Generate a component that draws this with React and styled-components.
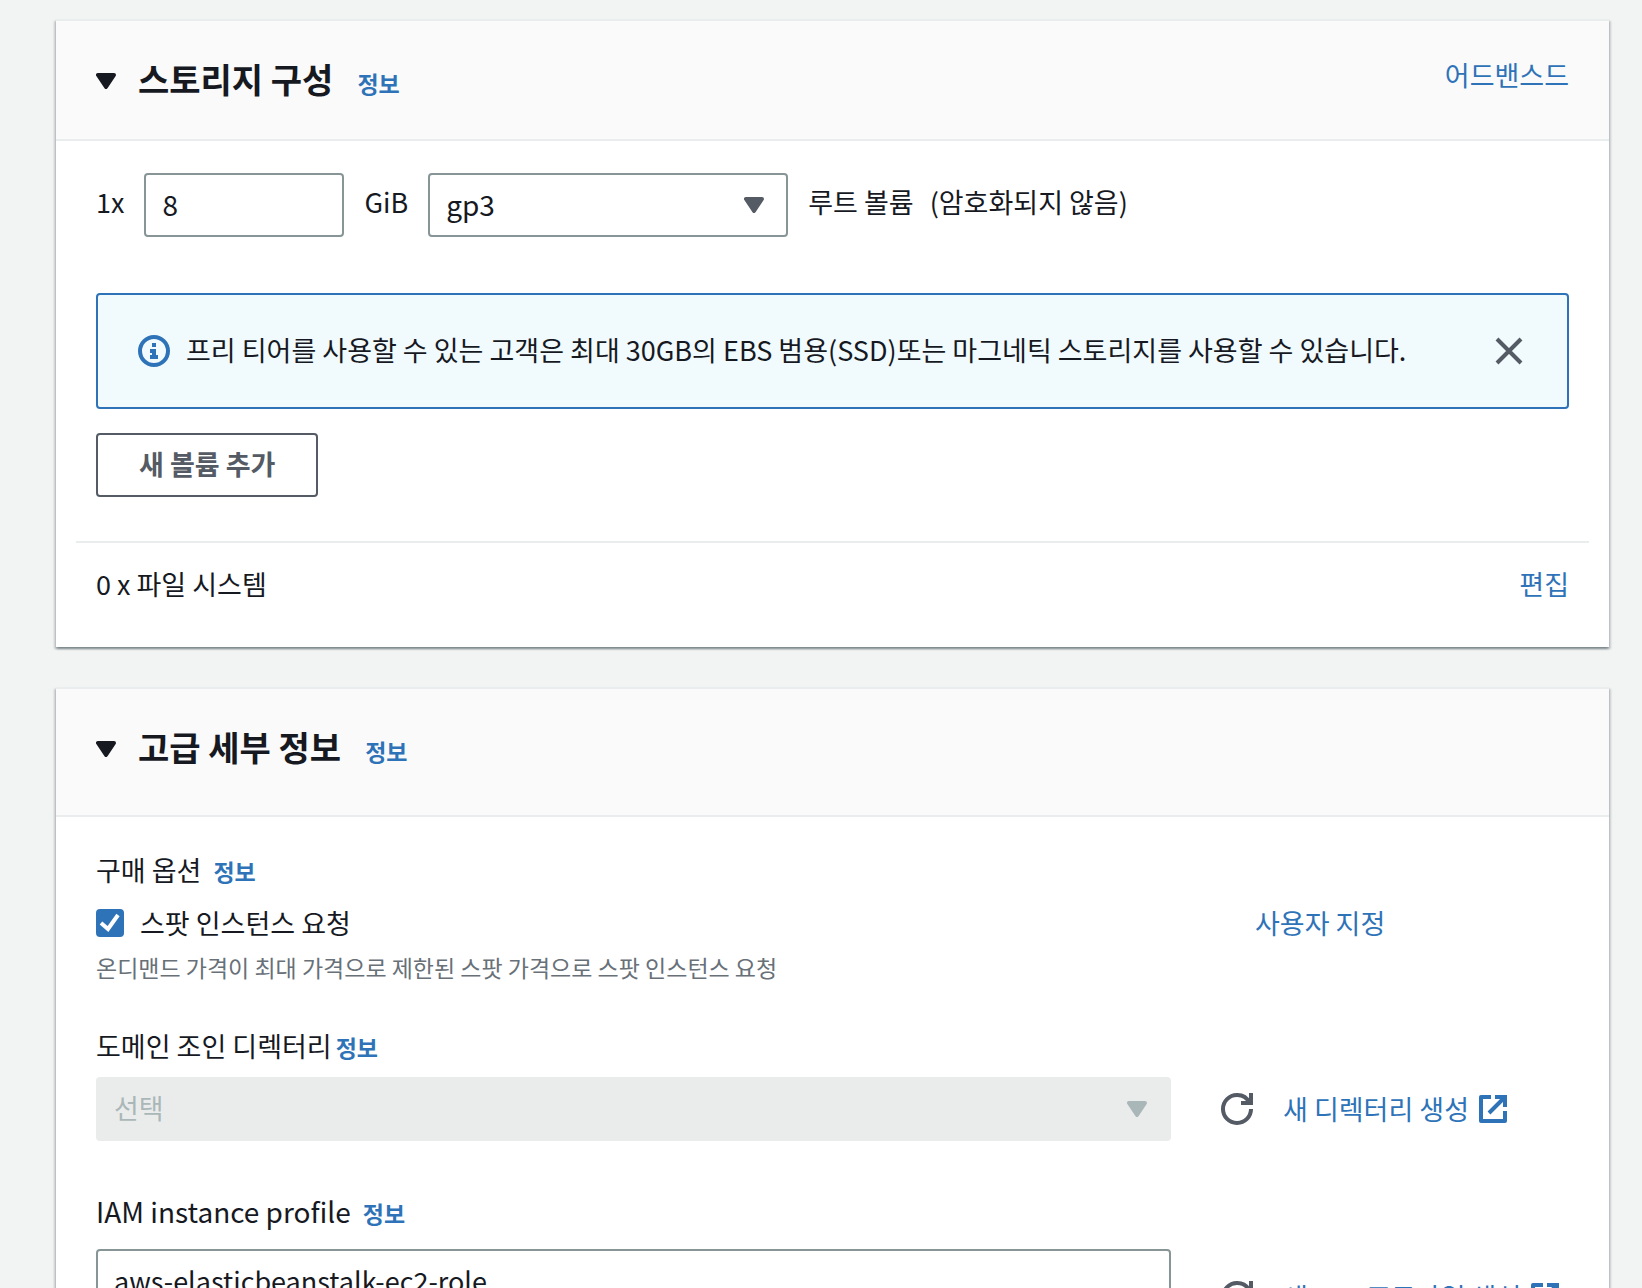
import React, { useState } from 'react'
import styled, { createGlobalStyle } from 'styled-components'

const COLOR = {
  TEXT: '#16191f',
  SUB_TEXT: '#687078',
  ICON: '#545b64',
  LINK: '#2e73b8',
  PAGE: '#f2f3f3',
  HEADER: '#fafafa',
  LINE: '#eaeded',
  BORDER: '#879596',
  DISABLED: '#aab7b8',
  DISABLED_BG: '#eaecec',
  INFO_BG: '#f1fafd',
}

const SIZE = {
  TITLE: 34,
  LATIN: 28,
  BODY: 27,
  SMALL: 23,
}

const FONT = "'Noto Sans CJK KR', 'Noto Sans', sans-serif"

const Caret = () => (
  <svg width="20" height="16" viewBox="3 4 10 8" aria-hidden="true">
    <path
      d="M4 5h8l-4 6-4-6z"
      fill="currentColor"
      stroke="currentColor"
      strokeWidth="2"
      strokeLinejoin="round"
    />
  </svg>
)

const InfoIcon = () => (
  <LineIcon width="32" height="32" viewBox="0 0 16 16" aria-hidden="true">
    <circle cx="8" cy="8" r="7" />
    <path d="M8 11V8H6M10 11H6M8 6V4" />
  </LineIcon>
)

const CloseIcon = () => (
  <LineIcon width="32" height="32" viewBox="0 0 16 16" aria-hidden="true">
    <path d="m2 2 12 12M14 2 2 14" />
  </LineIcon>
)

const RefreshIcon = () => (
  <LineIcon width="32" height="32" viewBox="0 0 16 16" aria-hidden="true">
    <path d="M10 5h5V0" />
    <path d="M15 8a6.957 6.957 0 0 1-7 7 6.957 6.957 0 0 1-7-7 6.957 6.957 0 0 1 7-7 6.87 6.87 0 0 1 6.3 4" />
  </LineIcon>
)

const ExternalIcon = () => (
  <LineIcon width="28" height="28" viewBox="1 1 14 14" aria-hidden="true">
    <path d="M14 9v5H2V2h5" strokeLinejoin="round" />
    <path d="M9 2h5v5M6 10l8-8" />
  </LineIcon>
)

const Panel = ({ title, action, headerBottom, children }) => (
  <Card>
    <CardHeader $bottom={headerBottom}>
      <HeaderLeft>
        <IconButton type="button" aria-label={title} aria-expanded="true" $dark>
          <Caret />
        </IconButton>
        <TitleGroup>
          <Title>{title}</Title>
          <InfoLink href="#info">정보</InfoLink>
        </TitleGroup>
      </HeaderLeft>
      {action}
    </CardHeader>
    {children}
  </Card>
)

const SelectBox = ({ id, label, options, size, tall, disabled }) => (
  <SelectWrap $disabled={disabled}>
    <Select
      id={id}
      aria-label={label}
      disabled={disabled}
      $size={size}
      $tall={tall}
    >
      {options.map((option) => (
        <option key={option}>{option}</option>
      ))}
    </Select>
    <SelectCaret>
      <Caret />
    </SelectCaret>
  </SelectWrap>
)

const StoragePanel = () => {
  const [showNotice, setShowNotice] = useState(true)

  return (
    <Panel
      title="스토리지 구성"
      headerBottom={36}
      action={<Link href="#advanced">어드밴스드</Link>}
    >
      <StorageBody>
        <VolumeRow>
          <RowText>1x</RowText>
          <SizeInput type="text" defaultValue="8" aria-label="크기(GiB)" />
          <RowText>GiB</RowText>
          <VolumeType>
            <SelectBox
              label="볼륨 유형"
              options={['gp3']}
              size={SIZE.LATIN}
            />
          </VolumeType>
          <RowText>
            <span>루트 볼륨</span>
            <span>(암호화되지 않음)</span>
          </RowText>
        </VolumeRow>
        {showNotice && (
          <Notice role="status">
            <InfoIcon />
            <NoticeText>
              프리 티어를 사용할 수 있는 고객은 최대 30GB의 EBS 범용(SSD)또는
              마그네틱 스토리지를 사용할 수 있습니다.
            </NoticeText>
            <IconButton
              type="button"
              aria-label="닫기"
              onClick={() => setShowNotice(false)}
            >
              <CloseIcon />
            </IconButton>
          </Notice>
        )}
        <AddButton type="button">새 볼륨 추가</AddButton>
      </StorageBody>
      <FileSystemRow>
        <span>0 x 파일 시스템</span>
        <Link href="#edit">편집</Link>
      </FileSystemRow>
    </Panel>
  )
}

const AdvancedPanel = () => {
  const [spot, setSpot] = useState(true)

  return (
    <Panel title="고급 세부 정보" headerBottom={44}>
      <AdvancedBody>
        <Field>
          <LabelRow $gap={12}>
            <span>구매 옵션</span>
            <InfoLink href="#info">정보</InfoLink>
          </LabelRow>
          <SpotRow>
            <CheckLabel>
              <CheckWrap>
                <Checkbox
                  type="checkbox"
                  checked={spot}
                  onChange={(e) => setSpot(e.target.checked)}
                />
                {spot && (
                  <CheckMark viewBox="0 0 14 14" aria-hidden="true">
                    <path d="M2.5 7 6 10l5-7" />
                  </CheckMark>
                )}
              </CheckWrap>
              스팟 인스턴스 요청
            </CheckLabel>
            <CustomizeCell>
              <Link href="#customize">사용자 지정</Link>
            </CustomizeCell>
          </SpotRow>
          <Description>
            온디맨드 가격이 최대 가격으로 제한된 스팟 가격으로 스팟 인스턴스 요청
          </Description>
        </Field>
        <Field>
          <LabelRow $gap={4}>
            <label htmlFor="directory">도메인 조인 디렉터리</label>
            <InfoLink href="#info">정보</InfoLink>
          </LabelRow>
          <ControlRow $top={15}>
            <SelectBox id="directory" options={['선택']} disabled />
            <SideActions>
              <IconButton type="button" aria-label="새로 고침">
                <RefreshIcon />
              </IconButton>
              <Link href="#directory">
                새 디렉터리 생성
                <ExternalIcon />
              </Link>
            </SideActions>
          </ControlRow>
        </Field>
        <Field>
          <LabelRow $gap={12} $size={SIZE.LATIN}>
            <label htmlFor="profile">IAM instance profile</label>
            <InfoLink href="#info">정보</InfoLink>
          </LabelRow>
          <ControlRow $top={22}>
            <SelectBox
              id="profile"
              options={['aws-elasticbeanstalk-ec2-role']}
              tall
            />
            <SideActions>
              <IconButton type="button" aria-label="새로 고침">
                <RefreshIcon />
              </IconButton>
              <Link href="#profile">
                새 IAM 프로파일 생성
                <ExternalIcon />
              </Link>
            </SideActions>
          </ControlRow>
        </Field>
      </AdvancedBody>
    </Panel>
  )
}

const App = () => (
  <>
    <GlobalStyle />
    <Page>
      <StoragePanel />
      <AdvancedPanel />
    </Page>
  </>
)

const GlobalStyle = createGlobalStyle`
  * {
    box-sizing: border-box;
  }
  body {
    margin: 0;
    background-color: ${COLOR.PAGE};
    color: ${COLOR.TEXT};
    font-family: ${FONT};
    font-size: ${SIZE.BODY}px;
    line-height: 32px;
  }
  button, input, select {
    font: inherit;
    color: inherit;
  }
  svg {
    display: block;
    flex-shrink: 0;
  }
`

const LineIcon = styled.svg`
  fill: none;
  stroke: currentColor;
  stroke-width: 2;
`

const Page = styled.main`
  display: flex;
  flex-direction: column;
  gap: 40px;
  height: 100vh;
  overflow: hidden;
  padding: 19px 33px 0 56px;
`

const Card = styled.section`
  flex-shrink: 0;
  background-color: #fff;
  border-top: 2px solid ${COLOR.LINE};
  box-shadow:
    0 2px 2px 0 rgba(0, 28, 36, 0.3),
    2px 2px 2px 0 rgba(0, 28, 36, 0.15),
    -2px 2px 2px 0 rgba(0, 28, 36, 0.15);
`

const CardHeader = styled.header`
  display: flex;
  justify-content: space-between;
  align-items: flex-start;
  padding: 38px 40px ${({ $bottom }) => $bottom}px;
  background-color: ${COLOR.HEADER};
  border-bottom: 2px solid ${COLOR.LINE};
`

const HeaderLeft = styled.div`
  display: flex;
  align-items: center;
  gap: 22px;
`

const TitleGroup = styled.div`
  display: flex;
  align-items: baseline;
  gap: 24px;
  padding-bottom: 4px;
`

const Title = styled.h2`
  margin: 0;
  font-size: ${SIZE.TITLE}px;
  font-weight: 700;
  line-height: 40px;
`

const Link = styled.a`
  display: inline-flex;
  align-items: center;
  gap: 10px;
  color: ${COLOR.LINK};
  text-decoration: none;
  white-space: nowrap;
`

const InfoLink = styled(Link)`
  font-size: ${SIZE.SMALL}px;
  font-weight: 700;
  line-height: 24px;
`

const StorageBody = styled.div`
  display: flex;
  flex-direction: column;
  align-items: flex-start;
  padding: 32px 40px 44px;
`

const VolumeRow = styled.div`
  display: flex;
  align-items: center;
  gap: 20px;
  margin-bottom: 56px;
`

const RowText = styled.div`
  display: flex;
  gap: 16px;
  padding-bottom: 6px;
`

const SizeInput = styled.input`
  width: 200px;
  height: 64px;
  padding: 0 16px 2px;
  border: 2px solid ${COLOR.BORDER};
  border-radius: 4px;
  background-color: #fff;
  font-size: ${SIZE.LATIN}px;
`

const VolumeType = styled.div`
  display: flex;
  width: 360px;
`

const SelectWrap = styled.div`
  display: grid;
  flex: 1;
  align-items: center;
  color: ${({ $disabled }) => ($disabled ? COLOR.DISABLED : COLOR.ICON)};
  > * {
    grid-area: 1 / 1;
  }
`

const Select = styled.select`
  appearance: none;
  width: 100%;
  height: ${({ $tall }) => ($tall ? 96 : 64)}px;
  padding: 0 60px ${({ $tall }) => ($tall ? 32 : 2)}px 16px;
  border: 2px solid ${COLOR.BORDER};
  border-radius: 4px;
  background-color: #fff;
  color: ${COLOR.TEXT};
  font-size: ${({ $size }) => $size || SIZE.BODY}px;
  line-height: 40px;
  &:disabled {
    border-color: ${COLOR.DISABLED_BG};
    background-color: ${COLOR.DISABLED_BG};
    color: ${COLOR.DISABLED};
    opacity: 1;
  }
`

const SelectCaret = styled.span`
  justify-self: end;
  margin-right: 24px;
  pointer-events: none;
`

const Notice = styled.div`
  display: flex;
  align-items: center;
  gap: 16px;
  width: 100%;
  min-height: 116px;
  margin-bottom: 24px;
  padding: 16px 42px 16px 40px;
  border: 2px solid ${COLOR.LINK};
  border-radius: 4px;
  background-color: ${COLOR.INFO_BG};
  color: ${COLOR.LINK};
`

const NoticeText = styled.p`
  flex: 1;
  margin: 0;
  padding-bottom: 2px;
  color: ${COLOR.TEXT};
`

const IconButton = styled.button`
  padding: 0;
  border: 0;
  background: none;
  color: ${({ $dark }) => ($dark ? COLOR.TEXT : COLOR.ICON)};
  cursor: pointer;
`

const AddButton = styled.button`
  height: 64px;
  padding: 0 41px 2px;
  border: 2px solid ${COLOR.ICON};
  border-radius: 4px;
  background-color: #fff;
  color: ${COLOR.ICON};
  font-weight: 700;
  cursor: pointer;
`

const FileSystemRow = styled.div`
  display: flex;
  justify-content: space-between;
  margin: 0 20px;
  padding: 25px 20px 47px;
  border-top: 2px solid ${COLOR.LINE};
`

const AdvancedBody = styled.div`
  display: flex;
  flex-direction: column;
  gap: 54px;
  padding: 37px 40px 60px;
`

const Field = styled.div`
  &:first-child {
    margin-bottom: -7px;
  }
`

const LabelRow = styled.div`
  display: flex;
  align-items: baseline;
  gap: ${({ $gap }) => $gap}px;
  height: 32px;
  font-size: ${({ $size }) => $size || SIZE.BODY}px;
`

const SpotRow = styled.div`
  display: flex;
  justify-content: space-between;
  margin: 21px 0 12px;
`

const CheckLabel = styled.label`
  display: flex;
  align-items: center;
  gap: 16px;
`

const CheckWrap = styled.span`
  display: grid;
  > * {
    grid-area: 1 / 1;
  }
`

const Checkbox = styled.input`
  appearance: none;
  width: 28px;
  height: 28px;
  margin: 0;
  border: 2px solid ${COLOR.BORDER};
  border-radius: 4px;
  background-color: #fff;
  &:checked {
    border-color: ${COLOR.LINK};
    background-color: ${COLOR.LINK};
  }
`

const CheckMark = styled.svg`
  width: 28px;
  height: 28px;
  fill: none;
  stroke: #fff;
  stroke-width: 2;
  pointer-events: none;
`

const CustomizeCell = styled.div`
  width: 314px;
`

const Description = styled.p`
  margin: 0;
  color: ${COLOR.SUB_TEXT};
  font-size: ${SIZE.SMALL}px;
`

const ControlRow = styled.div`
  display: flex;
  align-items: center;
  gap: 50px;
  margin-top: ${({ $top }) => $top}px;
`

const SideActions = styled.div`
  display: flex;
  align-items: center;
  gap: 30px;
  width: 348px;
`

export default App
